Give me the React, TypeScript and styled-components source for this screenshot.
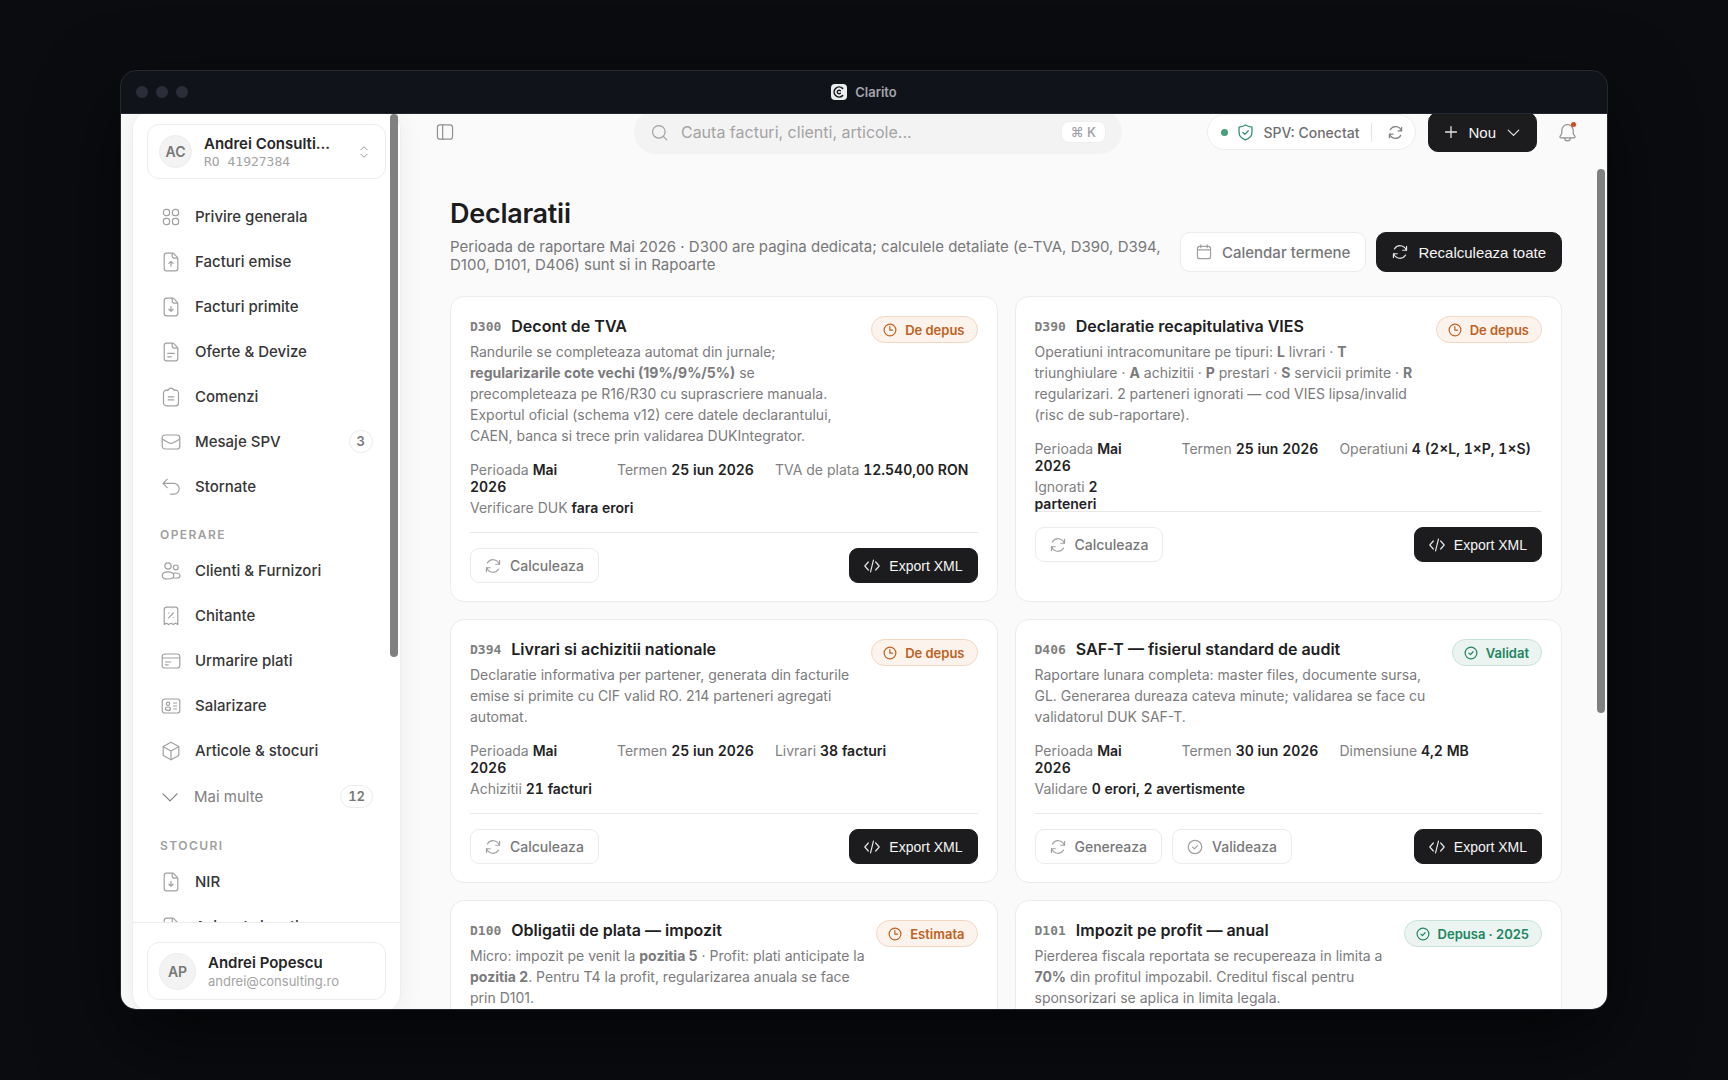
import React from 'react';
import styled, { createGlobalStyle, css } from 'styled-components';

const SANS = 'Inter, "Liberation Sans", sans-serif';
const MONO = '"DejaVu Sans Mono", "Liberation Mono", monospace';

const GlobalStyle = createGlobalStyle`
  *, *::before, *::after { box-sizing: border-box; }
  body { margin: 0; background: #0a0c10; font-family: ${SANS}; }
  h1, h2, h3, p, ul, dl, dd { margin: 0; padding: 0; }
  ul { list-style: none; }
  button { margin: 0; cursor: pointer; }
  svg { display: block; flex: none; }
`;

/* ---------- icons ---------- */

const Svg = styled.svg`
  fill: none;
  stroke: currentColor;
  stroke-linecap: round;
  stroke-linejoin: round;
`;

type IconName =
  | 'grid' | 'fileUp' | 'fileDown' | 'fileText' | 'clipboard' | 'mail' | 'undo' | 'users'
  | 'receipt' | 'card' | 'idCard' | 'box' | 'chevron' | 'sort' | 'panel' | 'search' | 'shield'
  | 'refresh' | 'plus' | 'bell' | 'calendar' | 'clock' | 'check' | 'code';

const FILE = (
  <>
    <path d="M11.5 1.2H5.6A2.4 2.4 0 0 0 3.2 3.6v12.8a2.4 2.4 0 0 0 2.4 2.4h8.8a2.4 2.4 0 0 0 2.4-2.4V6.8c0-.6-.2-1.2-.7-1.7l-3-3.2c-.4-.4-1-.7-1.6-.7z" />
    <path d="M11.2 1.4v2.5c0 1.3 1 2.3 2.3 2.3h3" />
  </>
);

const SHAPES: Record<IconName, React.ReactNode> = {
  grid: (
    <>
      <rect x="2.4" y="2.4" width="6.2" height="6.2" rx="2.6" />
      <rect x="11.4" y="2.4" width="6.2" height="6.2" rx="2.6" />
      <rect x="2.4" y="11.4" width="6.2" height="6.2" rx="2.6" />
      <rect x="11.4" y="11.4" width="6.2" height="6.2" rx="2.6" />
    </>
  ),
  fileUp: <>{FILE}<path d="M10 14.2V9.6M7.9 11.4 10 9.4l2.1 2" /></>,
  fileDown: <>{FILE}<path d="M10 9.4V14M7.9 12.2l2.1 2 2.1-2" /></>,
  fileText: <>{FILE}<path d="M6.8 14.8h3.4M6.8 11.4h6.4" /></>,
  clipboard: (
    <>
      <path d="M6.6 3.2H5.4A2.9 2.9 0 0 0 2.5 6.1v9.8a2.9 2.9 0 0 0 2.9 2.9h9.2a2.9 2.9 0 0 0 2.9-2.9V6.1a2.9 2.9 0 0 0-2.9-2.9h-1.2" />
      <path d="M6.6 3.2c.9-.2 1.4-2 3.4-2s2.5 1.8 3.4 2" />
      <path d="M7.2 9.8h5.6M7.2 12.8h5.6" />
    </>
  ),
  mail: (
    <>
      <rect x="1.2" y="3" width="17.6" height="14" rx="2.8" />
      <path d="M1.4 7.2 7.8 10.8c1.4.8 3 .8 4.4 0l6.4-3.6" />
    </>
  ),
  undo: <path d="M6.2 2.2 2 6.4l4.2 4.2M2.2 6.4h10.6a5.4 5.4 0 0 1 0 10.8H9.6" />,
  users: (
    <>
      <circle cx="7" cy="5" r="3.2" />
      <circle cx="14.8" cy="6.4" r="2.4" />
      <path d="M1.2 14.8c0-2.5 2.3-4 5.8-4s5.8 1.5 5.8 4-2.3 3.2-5.8 3.2-5.8-.7-5.8-3.2z" />
      <path d="M12.6 12.4c.7-.3 1.4-.4 2.2-.4 2.5 0 4.2 1.1 4.2 2.9 0 1.4-1.2 2.1-3.2 2.1h-3.6" />
    </>
  ),
  receipt: (
    <>
      <path d="M3.2 18.4V3.8a2.6 2.6 0 0 1 2.6-2.6h8.4a2.6 2.6 0 0 1 2.6 2.6v14.6l-2.3-1.2-2.2 1.4-2.3-1.4-2.3 1.4-2.2-1.4z" />
      <path d="m7.6 11.8 4.8-4.8M7.8 7.2h.1M12.2 11.6h.1" />
    </>
  ),
  card: (
    <>
      <rect x="1.2" y="3" width="17.6" height="14" rx="2.6" />
      <path d="M1.4 7h17.2M4.4 11h5.4M4.4 13.8h2.8" />
    </>
  ),
  idCard: (
    <>
      <rect x="1.2" y="3" width="17.6" height="14" rx="2.6" />
      <circle cx="7" cy="7.8" r="1.7" />
      <ellipse cx="7" cy="12.7" rx="2.5" ry="1.7" />
      <path d="M12.6 7h3M12.6 10h3M12.6 13h3" />
    </>
  ),
  box: (
    <>
      <path d="M10 1.2 17.8 5.6v8.8L10 18.8l-7.8-4.4V5.6z" />
      <path d="M2.4 5.8 10 10l7.6-4.2M10 10v8.6" />
    </>
  ),
  chevron: <path d="M3 6.8l7 7 7-7" />,
  sort: <path d="M5.6 6.8 10 2.4l4.4 4.4M5.6 13.2l4.4 4.4 4.4-4.4" />,
  panel: (
    <>
      <rect x="1.6" y="2" width="16.8" height="16" rx="2.8" />
      <path d="M7.4 2v16" />
    </>
  ),
  search: (
    <>
      <circle cx="9.2" cy="9.2" r="7.4" />
      <path d="m14.8 14.8 3.8 3.8" />
    </>
  ),
  shield: (
    <>
      <path d="M10 1.2c2.2 1.5 4.6 2 7.6 2.4v6.2c0 4.6-3 7.4-7.6 9-4.6-1.6-7.6-4.4-7.6-9V3.6c3-.4 5.4-.9 7.6-2.4z" />
      <path d="m7 10 2.2 2.2L13.2 8" />
    </>
  ),
  refresh: (
    <>
      <path d="M17.8 7.6A8.2 8.2 0 0 0 3 6.2M2.2 12.4A8.2 8.2 0 0 0 17 13.8" />
      <path d="M18.2 3v4.8h-4.8M1.8 17v-4.8h4.8" />
    </>
  ),
  plus: <path d="M10 2.2v15.6M2.2 10h15.6" />,
  bell: (
    <>
      <path d="M10 1.8c-3.6 0-6 2.6-6 6v3.4L2.2 14c-.4.8 0 1.6 1 1.6h13.6c1 0 1.4-.8 1-1.6L16 11.2V7.8c0-3.4-2.4-6-6-6z" />
      <path d="M7 16c.2 1.8 1.4 2.8 3 2.8s2.8-1 3-2.8" />
    </>
  ),
  calendar: (
    <>
      <rect x="1.8" y="3" width="16.4" height="15.4" rx="2.8" />
      <path d="M2 7.4h16M6 1.2v3.4M14 1.2v3.4" />
    </>
  ),
  clock: (
    <>
      <circle cx="10" cy="10" r="8.4" />
      <path d="M9.8 5v5.2h4" />
    </>
  ),
  check: (
    <>
      <circle cx="10" cy="10" r="8.4" />
      <path d="m7 10.2 2.2 2.2 3.8-4.2" />
    </>
  ),
  code: <path d="M5.4 5 1 10l4.4 5M14.6 5 19 10l-4.4 5M11.8 2.6 8.2 17.4" />,
};

function Icon({ name, size = 20, weight = 1.2 }: { name: IconName; size?: number; weight?: number }) {
  return (
    <Svg width={size} height={size} viewBox="0 0 20 20" strokeWidth={(weight * 20) / size} aria-hidden="true">
      {SHAPES[name]}
    </Svg>
  );
}

/* ---------- window ---------- */

const Desktop = styled.div`
  display: flex;
  height: 100vh;
  padding: 70px 120px;
`;

const Window = styled.div`
  flex: 1;
  min-width: 0;
  display: flex;
  flex-direction: column;
  overflow: hidden;
  border: 1px solid #25272e;
  border-radius: 16px;
  background: #10131a;
  box-shadow: 0 30px 80px rgba(0, 0, 0, 0.6);
`;

const TitleBar = styled.div`
  display: grid;
  grid-template-columns: 1fr auto 1fr;
  align-items: center;
  flex: none;
  height: 43px;
  padding: 0 15px;
  border-bottom: 1px solid #25272e;
`;

const Lights = styled.div`
  display: flex;
  gap: 8px;
`;

const Light = styled.span`
  width: 12px;
  height: 12px;
  border-radius: 50%;
  background: #2b2e39;
`;

const WindowTitle = styled.div`
  display: flex;
  align-items: center;
  gap: 8px;
  color: #a4a5a9;
  font-size: 13px;
  font-weight: 600;
`;

const Body = styled.div`
  flex: 1;
  min-height: 0;
  display: flex;
  overflow: hidden;
  background: #fafafa;
`;

const ScrollThumb = styled.span`
  position: absolute;
  width: 8px;
  border-radius: 4px;
  background: #808080;
`;

/* ---------- sidebar ---------- */

const Sidebar = styled.aside`
  position: relative;
  flex: none;
  display: flex;
  flex-direction: column;
  width: 269px;
  margin: -4px 0 -4px 11px;
  border: 1px solid #eeeeee;
  border-radius: 20px;
  background: #fff;
  box-shadow: 0 2px 24px rgba(0, 0, 0, 0.06);

  ${ScrollThumb} {
    top: 3px;
    right: 2px;
    height: 543px;
  }
`;

const accountBox = css`
  display: flex;
  align-items: center;
  width: 100%;
  border: 1px solid #ececec;
  border-radius: 12px;
  background: #fff;
  padding: 0 11px;
  font-family: inherit;
  text-align: left;
`;

const OrgButton = styled.button`
  ${accountBox}
  gap: 12px;
  height: 55px;
  color: #9a9a9a;
`;

const OrgArea = styled.div`
  flex: none;
  padding: 13px 14px 0;
`;

const Avatar = styled.span<{ $size: number }>`
  display: flex;
  align-items: center;
  justify-content: center;
  flex: none;
  width: ${(p) => p.$size}px;
  height: ${(p) => p.$size}px;
  border: 1px solid #ececec;
  border-radius: 50%;
  background: #f3f3f3;
  color: #777;
  font-size: 14px;
  font-weight: 600;
`;

const Who = styled.span`
  flex: 1;
  min-width: 0;
  display: flex;
  flex-direction: column;
`;

const WhoName = styled.span`
  overflow: hidden;
  text-overflow: ellipsis;
  white-space: nowrap;
  color: #262628;
  font-size: 15px;
  font-weight: 600;
  line-height: 20px;
`;

const WhoCode = styled.span`
  color: #a3a3a3;
  font-family: ${MONO};
  font-size: 13px;
  line-height: 16px;
`;

const WhoMail = styled.span`
  color: #a3a3a3;
  font-size: 13px;
  line-height: 16px;
`;

const SortHandle = styled.span`
  display: flex;
  justify-content: flex-end;
  width: 20px;
  padding-right: 3px;
`;

const Nav = styled.nav`
  flex: 1;
  min-height: 0;
  overflow: hidden;
  padding: 15px 27px 0;
`;

const NavLink = styled.a`
  display: flex;
  align-items: center;
  gap: 14px;
  height: 45px;
  padding-left: 1px;
  color: #363638;
  font-size: 15px;
  font-weight: 500;
  text-decoration: none;

  svg { color: #a0a0a0; }
`;

const MoreButton = styled.button`
  display: flex;
  align-items: center;
  gap: 14px;
  width: 100%;
  height: 47px;
  padding: 0;
  border: 0;
  background: none;
  color: #808080;
  font: 400 15px ${SANS};
`;

const Count = styled.span`
  margin-left: auto;
  min-width: 24px;
  height: 23px;
  padding: 0 7px;
  border: 1px solid #ebebeb;
  border-radius: 12px;
  color: #777;
  font-size: 13px;
  font-weight: 600;
  line-height: 21px;
  text-align: center;
  font-variant-numeric: tabular-nums;
`;

const NavHeading = styled.h3`
  padding: 18px 0 5px;
  color: #a0a0a0;
  font-size: 12px;
  font-weight: 600;
  line-height: 16px;
  letter-spacing: 0.12em;
  text-transform: uppercase;
`;

const UserArea = styled.div`
  flex: none;
  padding: 19px 14px 12px;
  border-top: 1px solid #ececec;
`;

const UserButton = styled.button`
  ${accountBox}
  gap: 12px;
  height: 58px;
`;

/* ---------- main ---------- */

const Main = styled.main`
  position: relative;
  flex: 1;
  min-width: 0;
  display: flex;
  flex-direction: column;

  > ${ScrollThumb} {
    top: 55px;
    right: 2px;
    height: 544px;
  }
`;

const TopBar = styled.header`
  flex: none;
  display: flex;
  align-items: center;
  height: 44px;
  margin-top: -4px;
  padding: 0 22px 0 26px;
`;

const Spacer = styled.span<{ $share: number }>`
  flex: ${(p) => p.$share} 1 0;
`;

const IconButton = styled.button`
  position: relative;
  display: flex;
  align-items: center;
  justify-content: center;
  flex: none;
  width: 36px;
  height: 36px;
  padding: 0;
  border: 0;
  background: none;
  color: #909090;
`;

const AlertDot = styled.span`
  position: absolute;
  top: 8px;
  right: 9px;
  width: 5px;
  height: 5px;
  border-radius: 50%;
  background: #cf4a1c;
`;

const Search = styled.label`
  flex: 0 1 488px;
  min-width: 0;
  display: flex;
  align-items: center;
  gap: 13px;
  height: 44px;
  padding: 0 17px;
  border-radius: 22px;
  background: #f3f3f3;
  color: #a0a0a0;

  input {
    flex: 1;
    min-width: 0;
    padding: 0;
    border: 0;
    outline: 0;
    background: none;
    color: #333;
    font: 400 16px ${SANS};
  }
  input::placeholder { color: #a3a3a3; opacity: 1; }
`;

const Kbd = styled.kbd`
  flex: none;
  padding: 0 9px;
  border-radius: 7px;
  background: #fff;
  box-shadow: 0 0 0 1px #efefef;
  color: #a0a0a0;
  font: 500 13px/20px ${SANS};
`;

const Tools = styled.div`
  display: flex;
  align-items: center;
  gap: 12px;
  flex: none;
`;

const Status = styled.div`
  display: flex;
  align-items: center;
  height: 36px;
  padding: 0 12px 0 13px;
  border: 1px solid #ececec;
  border-radius: 18px;
  background: #fff;
  color: #6f6f72;
  font-size: 14px;
  font-weight: 500;
  white-space: nowrap;

  > svg {
    margin: 0 9px;
    color: #32926f;
  }
`;

const StatusDot = styled.span`
  width: 7px;
  height: 7px;
  border-radius: 50%;
  background: #46a07e;
`;

const StatusRefresh = styled.button`
  display: flex;
  margin-left: 12px;
  padding: 2px 0 2px 16px;
  border: 0;
  border-left: 1px solid #e4e4e4;
  background: none;
  color: #808080;
`;

const Button = styled.button<{ $dark?: boolean; $small?: boolean }>`
  display: flex;
  align-items: center;
  flex: none;
  gap: ${(p) => (p.$small ? 9 : 10)}px;
  height: ${(p) => (p.$small ? 35 : 40)}px;
  padding: 0 ${(p) => (p.$small ? 14 : 15)}px;
  border: 1px solid ${(p) => (p.$dark ? '#1c1c1e' : '#ebebeb')};
  border-radius: ${(p) => (p.$small ? 9 : 10)}px;
  background: ${(p) => (p.$dark ? '#1c1c1e' : '#fff')};
  color: ${(p) => (p.$dark ? '#f5f5f5' : '#777779')};
  font-family: ${(p) => (p.$dark ? '"Liberation Sans", Arial, sans-serif' : SANS)};
  font-size: ${(p) => (p.$small ? 14 : 15)}px;
  font-weight: ${(p) => (p.$dark ? 400 : 500)};
  white-space: nowrap;

  svg { color: ${(p) => (p.$dark ? '#e4e4e4' : '#a0a0a0')}; }
`;

const Page = styled.div`
  flex: 1;
  min-height: 0;
  overflow: hidden;
  margin-top: 14px;
  padding: 30px 45px 0 49px;
`;

const PageHead = styled.div`
  display: flex;
  align-items: flex-end;
  gap: 12px;
  margin-bottom: 22px;
`;

const HeadText = styled.div`
  flex: 1;
  min-width: 0;
`;

const PageTitle = styled.h1`
  margin-bottom: 8px;
  color: #1c1c1e;
  font-size: 27px;
  font-weight: 600;
  line-height: 32px;
  letter-spacing: -0.01em;
`;

const Lead = styled.p`
  color: #777779;
  font-size: 15px;
  line-height: 18px;
`;

const HeadActions = styled.div`
  display: flex;
  gap: 10px;
  flex: none;
  padding-bottom: 2px;
`;

const Cards = styled.div`
  display: grid;
  grid-template-columns: repeat(2, minmax(0, 1fr));
  gap: 17px;
`;

const Card = styled.article`
  min-height: 240px;
  padding: 19px 19px 18px;
  border: 1px solid #ebebeb;
  border-radius: 14px;
  background: #fff;
`;

const CardHead = styled.div`
  display: flex;
  align-items: flex-start;
  gap: 11px;
`;

const CardText = styled.div`
  flex: 1;
  min-width: 0;
`;

const CardTitle = styled.h2`
  display: flex;
  align-items: center;
  gap: 10px;
  margin-bottom: 4px;
  color: #202022;
  font-size: 16px;
  font-weight: 600;
  line-height: 21px;
`;

const Code = styled.span`
  color: #808080;
  font: 700 13px/21px ${MONO};
`;

const Description = styled.p`
  color: #7b7b7d;
  font-size: 14px;
  line-height: 21px;

  strong { font-weight: 700; }
`;

const Badge = styled.span<{ $ok?: boolean }>`
  display: flex;
  align-items: center;
  gap: 8px;
  flex: none;
  height: 27px;
  padding: 0 12px 0 11px;
  border: 1px solid ${(p) => (p.$ok ? '#c6e2d8' : '#f2d6c1')};
  border-radius: 14px;
  background: ${(p) => (p.$ok ? '#ebf4f1' : '#fcf3ed')};
  color: ${(p) => (p.$ok ? '#208560' : '#c0621f')};
  font-size: 13px;
  font-weight: 600;
  line-height: 24px;
  white-space: nowrap;
`;

const Facts = styled.dl`
  display: flex;
  flex-wrap: wrap;
  align-content: flex-start;
  gap: 4px 21px;
  height: 55px;
  margin: 15px 0 16px;
  color: #808082;
  font-size: 14px;
  line-height: 17px;
`;

const Fact = styled.div<{ $narrow?: boolean }>`
  ${(p) => p.$narrow && css`
    width: 126px;
    padding-right: 30px;
  `}

  dt, dd { display: inline; }
  dd {
    color: #222224;
    font-weight: 600;
    font-variant-numeric: tabular-nums;
  }
`;

const Actions = styled.div`
  display: flex;
  gap: 10px;
  padding-top: 15px;
  border-top: 1px solid #e9e9e9;

  > :last-child { margin-left: auto; }
`;

/* ---------- data ---------- */

type NavEntry = { icon: IconName; label: string; count?: number };

const PRIMARY: NavEntry[] = [
  { icon: 'grid', label: 'Privire generala' },
  { icon: 'fileUp', label: 'Facturi emise' },
  { icon: 'fileDown', label: 'Facturi primite' },
  { icon: 'fileText', label: 'Oferte & Devize' },
  { icon: 'clipboard', label: 'Comenzi' },
  { icon: 'mail', label: 'Mesaje SPV', count: 3 },
  { icon: 'undo', label: 'Stornate' },
];

const OPERATIONS: NavEntry[] = [
  { icon: 'users', label: 'Clienti & Furnizori' },
  { icon: 'receipt', label: 'Chitante' },
  { icon: 'card', label: 'Urmarire plati' },
  { icon: 'idCard', label: 'Salarizare' },
  { icon: 'box', label: 'Articole & stocuri' },
];

const STOCK: NavEntry[] = [
  { icon: 'fileDown', label: 'NIR' },
  { icon: 'fileUp', label: 'Avize de insotire' },
];

type Declaration = {
  code: string;
  title: string;
  status: string;
  ok?: boolean;
  text: React.ReactNode;
  facts?: { label: string; value: string; narrow?: boolean }[];
  actions?: { icon: IconName; label: string }[];
};

const CALC = [{ icon: 'refresh' as IconName, label: 'Calculeaza' }];

const DECLARATIONS: Declaration[] = [
  {
    code: 'D300',
    title: 'Decont de TVA',
    status: 'De depus',
    text: (
      <>
        Randurile se completeaza automat din jurnale; <strong>regularizarile cote vechi (19%/9%/5%)</strong> se
        precompleteaza pe R16/R30 cu suprascriere manuala. Exportul oficial (schema v12) cere datele declarantului,
        CAEN, banca si trece prin validarea DUKIntegrator.
      </>
    ),
    facts: [
      { label: 'Perioada', value: 'Mai 2026', narrow: true },
      { label: 'Termen', value: '25 iun 2026' },
      { label: 'TVA de plata', value: '12.540,00 RON' },
      { label: 'Verificare DUK', value: 'fara erori' },
    ],
    actions: CALC,
  },
  {
    code: 'D390',
    title: 'Declaratie recapitulativa VIES',
    status: 'De depus',
    text: (
      <>
        Operatiuni intracomunitare pe tipuri: <strong>L</strong> livrari · <strong>T</strong> triunghiulare ·{' '}
        <strong>A</strong> achizitii · <strong>P</strong> prestari · <strong>S</strong> servicii primite ·{' '}
        <strong>R</strong> regularizari. 2 parteneri ignorati — cod VIES lipsa/invalid (risc de sub-raportare).
      </>
    ),
    facts: [
      { label: 'Perioada', value: 'Mai 2026', narrow: true },
      { label: 'Termen', value: '25 iun 2026' },
      { label: 'Operatiuni', value: '4 (2×L, 1×P, 1×S)' },
      { label: 'Ignorati', value: '2 parteneri', narrow: true },
    ],
    actions: CALC,
  },
  {
    code: 'D394',
    title: 'Livrari si achizitii nationale',
    status: 'De depus',
    text: 'Declaratie informativa per partener, generata din facturile emise si primite cu CIF valid RO. 214 parteneri agregati automat.',
    facts: [
      { label: 'Perioada', value: 'Mai 2026', narrow: true },
      { label: 'Termen', value: '25 iun 2026' },
      { label: 'Livrari', value: '38 facturi' },
      { label: 'Achizitii', value: '21 facturi' },
    ],
    actions: CALC,
  },
  {
    code: 'D406',
    title: 'SAF-T — fisierul standard de audit',
    status: 'Validat',
    ok: true,
    text: 'Raportare lunara completa: master files, documente sursa, GL. Generarea dureaza cateva minute; validarea se face cu validatorul DUK SAF-T.',
    facts: [
      { label: 'Perioada', value: 'Mai 2026', narrow: true },
      { label: 'Termen', value: '30 iun 2026' },
      { label: 'Dimensiune', value: '4,2 MB' },
      { label: 'Validare', value: '0 erori, 2 avertismente' },
    ],
    actions: [
      { icon: 'refresh', label: 'Genereaza' },
      { icon: 'check', label: 'Valideaza' },
    ],
  },
  {
    code: 'D100',
    title: 'Obligatii de plata — impozit',
    status: 'Estimata',
    text: (
      <>
        Micro: impozit pe venit la <strong>pozitia 5</strong> · Profit: plati anticipate la <strong>pozitia 2</strong>.
        Pentru T4 la profit, regularizarea anuala se face prin D101.
      </>
    ),
  },
  {
    code: 'D101',
    title: 'Impozit pe profit — anual',
    status: 'Depusa · 2025',
    ok: true,
    text: (
      <>
        Pierderea fiscala reportata se recupereaza in limita a <strong>70%</strong> din profitul impozabil. Creditul
        fiscal pentru sponsorizari se aplica in limita legala.
      </>
    ),
  },
];

/* ---------- parts ---------- */

function Logo() {
  return (
    <svg width="16" height="16" viewBox="0 0 16 16" aria-hidden="true">
      <rect width="16" height="16" rx="4" fill="#eceded" />
      <g fill="none" stroke="#15181f" strokeLinecap="round">
        <path d="M11.6 4.4A5 5 0 1 0 11.600 11.600" strokeWidth="1.600" />
        <path d="M9.400 6.800A1.800 1.800 0 1 0 9.400 9.200" strokeWidth="1.400" />
      </g>
    </svg>
  );
}

function NavList({ entries }: { entries: NavEntry[] }) {
  return (
    <ul>
      {entries.map((e) => (
        <li key={e.label}>
          <NavLink href="#">
            <Icon name={e.icon} />
            {e.label}
            {e.count !== undefined && <Count>{e.count}</Count>}
          </NavLink>
        </li>
      ))}
    </ul>
  );
}

function DeclarationCard({ item }: { item: Declaration }) {
  return (
    <Card>
      <CardHead>
        <CardText>
          <CardTitle>
            <Code>{item.code}</Code>
            {item.title}
          </CardTitle>
          <Description>{item.text}</Description>
        </CardText>
        <Badge $ok={item.ok}>
          <Icon name={item.ok ? 'check' : 'clock'} size={14} />
          {item.status}
        </Badge>
      </CardHead>
      {item.facts && (
        <Facts>
          {item.facts.map((f) => (
            <Fact key={f.label} $narrow={f.narrow}>
              <dt>{f.label}</dt> <dd>{f.value}</dd>
            </Fact>
          ))}
        </Facts>
      )}
      {item.actions && (
        <Actions>
          {item.actions.map((a) => (
            <Button key={a.label} type="button" $small>
              <Icon name={a.icon} size={16} />
              {a.label}
            </Button>
          ))}
          <Button type="button" $small $dark>
            <Icon name="code" size={16} />
            Export XML
          </Button>
        </Actions>
      )}
    </Card>
  );
}

export default function App() {
  return (
    <Desktop>
      <GlobalStyle />
      <Window>
        <TitleBar>
          <Lights>
            <Light />
            <Light />
            <Light />
          </Lights>
          <WindowTitle>
            <Logo />
            Clarito
          </WindowTitle>
        </TitleBar>
        <Body>
          <Sidebar>
            <OrgArea>
              <OrgButton type="button">
                <Avatar $size={33}>AC</Avatar>
                <Who>
                  <WhoName>Andrei Consulti...</WhoName>
                  <WhoCode>RO 41927384</WhoCode>
                </Who>
                <SortHandle>
                  <Icon name="sort" size={14} weight={1} />
                </SortHandle>
              </OrgButton>
            </OrgArea>
            <Nav>
              <NavList entries={PRIMARY} />
              <NavHeading>Operare</NavHeading>
              <NavList entries={OPERATIONS} />
              <MoreButton type="button">
                <Icon name="chevron" />
                Mai multe
                <Count>12</Count>
              </MoreButton>
              <NavHeading>Stocuri</NavHeading>
              <NavList entries={STOCK} />
            </Nav>
            <UserArea>
              <UserButton type="button">
                <Avatar $size={37}>AP</Avatar>
                <Who>
                  <WhoName>Andrei Popescu</WhoName>
                  <WhoMail>andrei@consulting.ro</WhoMail>
                </Who>
              </UserButton>
            </UserArea>
            <ScrollThumb />
          </Sidebar>
          <Main>
            <TopBar>
              <IconButton type="button" aria-label="Meniu">
                <Icon name="panel" size={18} />
              </IconButton>
              <Spacer $share={2} />
              <Search>
                <Icon name="search" size={17} />
                <input type="search" placeholder="Cauta facturi, clienti, articole..." aria-label="Cauta" />
                <Kbd>⌘ K</Kbd>
              </Search>
              <Spacer $share={1} />
              <Tools>
                <Status>
                  <StatusDot />
                  <Icon name="shield" size={17} weight={1.3} />
                  SPV: Conectat
                  <StatusRefresh type="button" aria-label="Reincarca">
                    <Icon name="refresh" size={15} />
                  </StatusRefresh>
                </Status>
                <Button type="button" $dark>
                  <Icon name="plus" size={14} weight={1.3} />
                  Nou
                  <Icon name="chevron" size={15} />
                </Button>
                <IconButton type="button" aria-label="Notificari">
                  <Icon name="bell" size={19} />
                  <AlertDot />
                </IconButton>
              </Tools>
            </TopBar>
            <Page>
              <PageHead>
                <HeadText>
                  <PageTitle>Declaratii</PageTitle>
                  <Lead>
                    Perioada de raportare Mai 2026 · D300 are pagina dedicata; calculele detaliate (e-TVA, D390, D394,
                    D100, D101, D406) sunt si in Rapoarte
                  </Lead>
                </HeadText>
                <HeadActions>
                  <Button type="button">
                    <Icon name="calendar" size={16} />
                    Calendar termene
                  </Button>
                  <Button type="button" $dark>
                    <Icon name="refresh" size={16} />
                    Recalculeaza toate
                  </Button>
                </HeadActions>
              </PageHead>
              <Cards>
                {DECLARATIONS.map((d) => (
                  <DeclarationCard key={d.code} item={d} />
                ))}
              </Cards>
            </Page>
            <ScrollThumb />
          </Main>
        </Body>
      </Window>
    </Desktop>
  );
}
